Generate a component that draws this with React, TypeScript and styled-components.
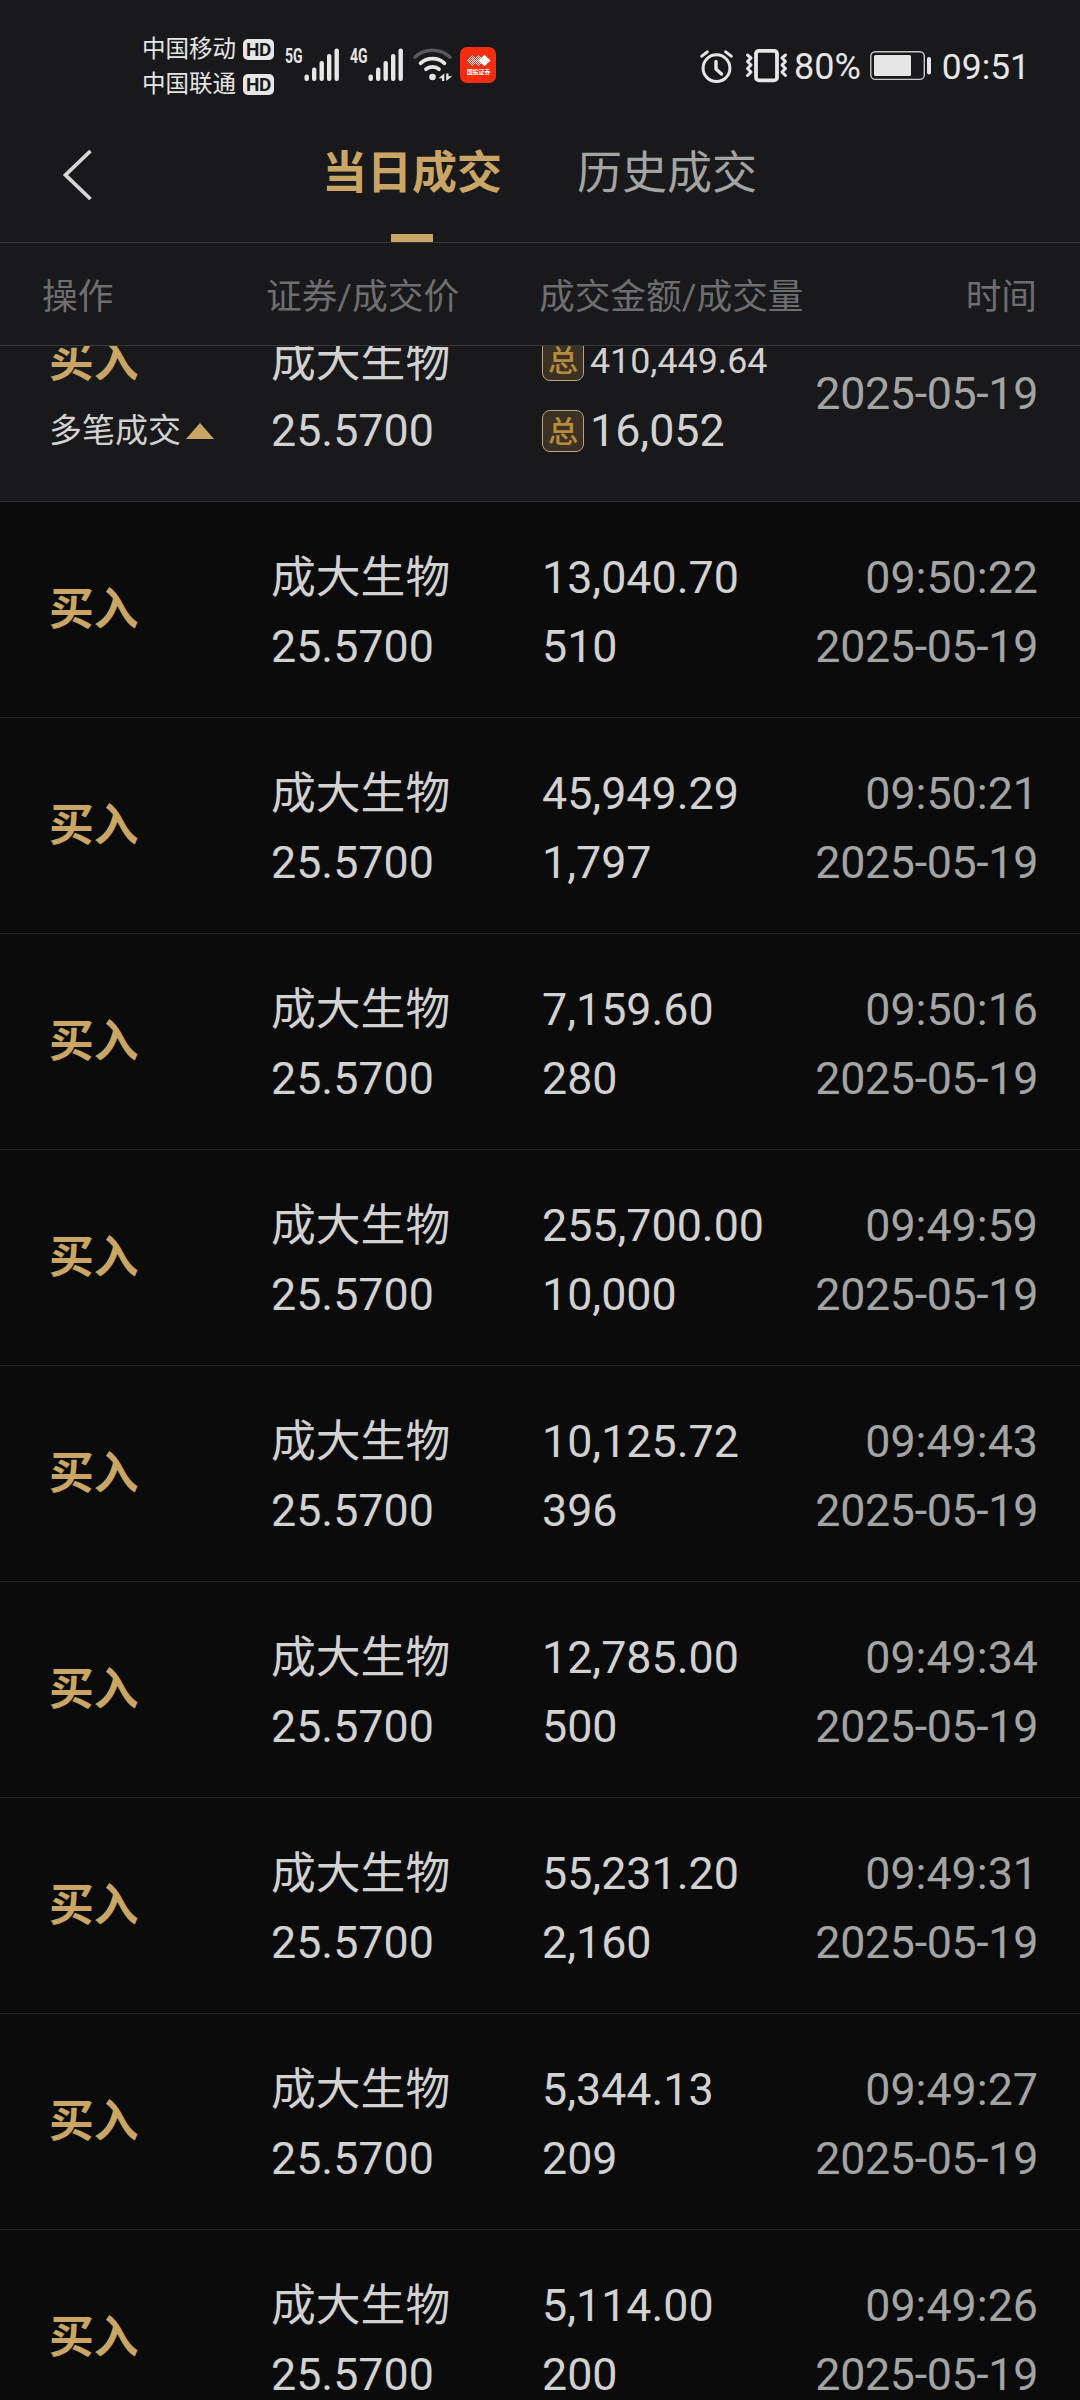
import React from 'react';
import styled, { createGlobalStyle } from 'styled-components';

const GlobalStyle = createGlobalStyle`
  * { box-sizing: border-box; }
  html, body { margin: 0; background: #0b0b0b; }
  body { font-family: Roboto, 'Noto Sans CJK SC', sans-serif; }
`;

const Screen = styled.main`
  width: 1080px;
  height: 2400px;
  display: flex;
  flex-direction: column;
  overflow: hidden;
  background: #0b0b0b;
  color: #d2d2d2;
`;

const StatusBar = styled.header`
  height: 110px;
  flex: none;
  display: flex;
  justify-content: space-between;
  align-items: flex-start;
  padding: 31px 50px 0 142px;
  background: #19191b;
  color: #e6e6e6;
`;

const StatusGroup = styled.div`
  display: flex;
  align-items: flex-start;
`;

const Carriers = styled.div`
  display: flex;
  flex-direction: column;
  padding-top: 1px;
`;

const Carrier = styled.div`
  display: flex;
  align-items: center;
  gap: 7px;
  height: 35px;
  font-size: 23.5px;
  line-height: 35px;
`;

const HdBadge = styled.span`
  width: 31px;
  height: 21px;
  border-radius: 5px;
  background: #e6e6e6;
  color: #19191b;
  font-size: 19px;
  font-weight: 700;
  line-height: 21px;
  text-align: center;
  letter-spacing: -0.5px;
`;

const NetLabel = styled.span<{ $gap: number }>`
  width: 18px;
  margin-left: ${(p) => p.$gap}px;
  margin-top: 14px;
  font-family: Roboto, sans-serif;
  font-size: 20px;
  font-weight: 700;
  line-height: 22px;
  white-space: nowrap;

  span {
    display: inline-block;
    transform: scaleX(0.7);
    transform-origin: left;
  }
`;

const Glyph = styled.svg<{ $left?: number; $top?: number }>`
  display: block;
  flex: none;
  margin-left: ${(p) => p.$left ?? 0}px;
  margin-top: ${(p) => p.$top ?? 0}px;
`;

const StatusText = styled.span<{ $left: number; $size?: number }>`
  margin-left: ${(p) => p.$left}px;
  margin-top: 13px;
  font-size: ${(p) => p.$size ?? 36}px;
  line-height: 46px;
`;

const NavBar = styled.nav`
  height: 133px;
  flex: none;
  display: flex;
  align-items: stretch;
  padding-left: 62px;
  border-bottom: 1px solid #38383a;
  background: #19191b;
`;

const BackButton = styled.button`
  width: 32px;
  margin: 0 228px 0 0;
  padding: 38px 0 0;
  border: 0;
  background: none;
  display: flex;
  align-items: flex-start;
`;

const Tabs = styled.div`
  display: flex;
  gap: 75px;
`;

const Tab = styled.div<{ $active?: boolean }>`
  display: flex;
  flex-direction: column;
  align-items: center;
  justify-content: space-between;
  padding-top: 29px;
  font-size: 45px;
  line-height: 70px;
  font-weight: ${(p) => (p.$active ? 700 : 400)};
  color: ${(p) => (p.$active ? '#c9a566' : '#a3a4a4')};
`;

const Underline = styled.span`
  width: 42px;
  height: 8px;
  background: #c9a566;
`;

const ColumnHeads = styled.div`
  height: 103px;
  flex: none;
  display: grid;
  grid-template-columns: 224px 273px 1fr auto;
  align-items: center;
  padding: 5px 43px 0 42px;
  border-bottom: 1px solid #38383a;
  background: #19191b;
  color: #6e6e70;
  font-size: 35.7px;
  line-height: 52px;
`;

const List = styled.section`
  flex: 1;
  min-height: 0;
  overflow: hidden;
`;

const Row = styled.article<{ $summary?: boolean }>`
  height: 216px;
  margin-top: ${(p) => (p.$summary ? -60 : 0)}px;
  display: grid;
  grid-template-columns: 222px 271px 1fr auto;
  align-items: start;
  padding: 41px 42px 0 49px;
  border-bottom: 1px solid ${(p) => (p.$summary ? '#333335' : '#222224')};
  background: ${(p) => (p.$summary ? '#19191b' : '#0b0b0b')};
  font-size: 44.8px;
  line-height: 69px;
  white-space: nowrap;
`;

const Cell = styled.div<{ $single?: boolean }>`
  height: ${(p) => (p.$single ? 132 : 138)}px;
  display: flex;
  flex-direction: column;
  justify-content: center;
`;

const TimeCell = styled(Cell)`
  align-items: flex-end;
  color: #a3a4a4;
`;

const DateText = styled.span`
  letter-spacing: -0.35px;
`;

const Action = styled.strong`
  font-weight: 700;
  color: #c9a566;
`;

const Multi = styled.span`
  display: flex;
  align-items: center;
  gap: 5px;
  font-size: 33px;
`;

const Triangle = styled.i`
  border: 14px solid transparent;
  border-top: 0;
  border-bottom: 16px solid #c9a566;
`;

const Total = styled.span<{ $small?: boolean }>`
  display: flex;
  align-items: center;
  gap: 6px;
  height: 69px;
  font-size: ${(p) => (p.$small ? 35.8 : 44.8)}px;
`;

const TotalBadge = styled.span<{ $lift: number }>`
  width: 42px;
  height: 42px;
  margin-bottom: ${(p) => p.$lift}px;
  border: 1px solid #b9a27c;
  border-radius: 8px;
  background: #3b3124;
  color: #b88c3e;
  font-size: 30px;
  font-weight: 500;
  line-height: 41px;
  text-align: center;
`;

function SignalBars({ left }: { left: number }) {
  const tops = [26.5, 19.5, 13, 6, 0.5];
  return (
    <Glyph $left={left} $top={17} width="36" height="34" viewBox="0 0 36 34">
      {tops.map((top, i) => (
        <rect key={top} x={0.5 + i * 7.5} y={top} width="4.4" height={33 - top} rx="2" fill="#e6e6e6" />
      ))}
    </Glyph>
  );
}

function WifiIcon() {
  return (
    <Glyph $left={9} $top={17} width="40" height="34" viewBox="0 0 40 34" fill="none" strokeLinecap="round">
      <path d="M2 9.2C12 0 27 0 37 9.2" stroke="#58585a" strokeWidth="3.4" />
      <path d="M7.5 15.3C14 9 25 9 31.5 15.3" stroke="#e6e6e6" strokeWidth="3.7" />
      <path d="M13 21.2C16.5 18.2 22.5 18.2 26 21.2" stroke="#e6e6e6" strokeWidth="3.7" />
      <circle cx="19.5" cy="29" r="3.3" fill="#e6e6e6" />
      <path d="M31.3 25.5V33H29V30.3H25.5ZM33.2 25.5V33L39.3 28.3H35.5V25.5Z" fill="#e6e6e6" />
    </Glyph>
  );
}

function BrokerIcon() {
  return (
    <Glyph $left={7} $top={16} width="36" height="36" viewBox="0 0 36 36">
      <defs>
        <pattern id="mesh" width="2" height="2" patternUnits="userSpaceOnUse">
          <rect width="1" height="1" fill="#fff" />
          <rect x="1" y="1" width="1" height="1" fill="#fff" />
        </pattern>
      </defs>
      <rect width="36" height="36" rx="7" fill="#f42d10" />
      <path d="M12.5 8L18.5 13.5L12.5 19L6.5 13.5Z" fill="url(#mesh)" />
      <path d="M18.5 8L24.5 13.5L18.5 19L12.5 13.5Z" fill="url(#mesh)" />
      <path d="M24.5 7.8L30.5 13.5L24.5 19.2L18.5 13.5Z" fill="#fff" />
      <text x="7" y="26.8" fill="#fff" fontSize="5.8" fontWeight="700" fontFamily="'Noto Sans CJK SC', sans-serif">国投证券</text>
    </Glyph>
  );
}

function AlarmIcon() {
  return (
    <Glyph $top={18} width="34" height="35" viewBox="0 0 34 35" fill="none" stroke="#e6e6e6" strokeLinecap="round">
      <circle cx="16.5" cy="19.2" r="13.4" strokeWidth="3" />
      <path d="M16 12.5V20L21.5 25" strokeWidth="3.4" strokeLinejoin="round" />
      <path d="M1.8 7.2L7.3 2.8M31.2 7.2L25.7 2.8" strokeWidth="3" />
    </Glyph>
  );
}

function VibrateIcon() {
  return (
    <Glyph $left={11} $top={17} width="44" height="35" viewBox="0 0 44 35" fill="none" stroke="#e6e6e6" strokeLinecap="round" strokeLinejoin="round">
      <rect x="11" y="2.8" width="21" height="29.6" rx="3" strokeWidth="3.8" />
      <path d="M2.5 7L6 10L2.5 13.5L6 17L2.5 20.5L6 24L2.5 27.5" strokeWidth="3" />
      <path d="M40.5 7L37 10L40.5 13.5L37 17L40.5 20.5L37 24L40.5 27.5" strokeWidth="3" />
    </Glyph>
  );
}

function BatteryIcon() {
  return (
    <Glyph $left={9} $top={20} width="62" height="30" viewBox="0 0 62 30">
      <rect x="0.8" y="0.8" width="53.5" height="27.6" rx="4.5" fill="none" stroke="#c9c9c9" strokeWidth="1.4" />
      <rect x="4" y="4" width="37" height="21" rx="1.5" fill="#e6e6e6" />
      <rect x="57" y="6" width="4" height="17.5" rx="2" fill="#e6e6e6" />
    </Glyph>
  );
}

const trades = [
  { amount: '13,040.70', volume: '510', time: '09:50:22' },
  { amount: '45,949.29', volume: '1,797', time: '09:50:21' },
  { amount: '7,159.60', volume: '280', time: '09:50:16' },
  { amount: '255,700.00', volume: '10,000', time: '09:49:59' },
  { amount: '10,125.72', volume: '396', time: '09:49:43' },
  { amount: '12,785.00', volume: '500', time: '09:49:34' },
  { amount: '55,231.20', volume: '2,160', time: '09:49:31' },
  { amount: '5,344.13', volume: '209', time: '09:49:27' },
  { amount: '5,114.00', volume: '200', time: '09:49:26' },
];

export default function App() {
  return (
    <>
      <GlobalStyle />
      <Screen>
        <StatusBar>
          <StatusGroup>
            <Carriers>
              <Carrier>中国移动<HdBadge>HD</HdBadge></Carrier>
              <Carrier>中国联通<HdBadge>HD</HdBadge></Carrier>
            </Carriers>
            <NetLabel $gap={11}><span>5G</span></NetLabel>
            <SignalBars left={1} />
            <NetLabel $gap={10}><span>4G</span></NetLabel>
            <SignalBars left={0} />
            <WifiIcon />
            <BrokerIcon />
          </StatusGroup>
          <StatusGroup>
            <AlarmIcon />
            <VibrateIcon />
            <StatusText $left={5}>80%</StatusText>
            <BatteryIcon />
            <StatusText $left={10} $size={35.4}>09:51</StatusText>
          </StatusGroup>
        </StatusBar>

        <NavBar>
          <BackButton aria-label="返回">
            <Glyph width="32" height="54" viewBox="0 0 32 54" fill="none" stroke="#d6d6d6" strokeWidth="3.8">
              <path d="M28.5 3L3.5 27L28.5 51" />
            </Glyph>
          </BackButton>
          <Tabs>
            <Tab $active>当日成交<Underline /></Tab>
            <Tab>历史成交</Tab>
          </Tabs>
        </NavBar>

        <ColumnHeads>
          <span>操作</span>
          <span>证券/成交价</span>
          <span>成交金额/成交量</span>
          <span>时间</span>
        </ColumnHeads>

        <List>
          <Row $summary>
            <Cell>
              <Action>买入</Action>
              <Multi>多笔成交<Triangle /></Multi>
            </Cell>
            <Cell>
              <span>成大生物</span>
              <span>25.5700</span>
            </Cell>
            <Cell>
              <Total $small><TotalBadge $lift={4}>总</TotalBadge>410,449.64</Total>
              <Total><TotalBadge $lift={0}>总</TotalBadge>16,052</Total>
            </Cell>
            <TimeCell $single>
              <DateText>2025-05-19</DateText>
            </TimeCell>
          </Row>
          {trades.map((trade) => (
            <Row key={trade.time}>
              <Cell $single>
                <Action>买入</Action>
              </Cell>
              <Cell>
                <span>成大生物</span>
                <span>25.5700</span>
              </Cell>
              <Cell>
                <span>{trade.amount}</span>
                <span>{trade.volume}</span>
              </Cell>
              <TimeCell>
                <span>{trade.time}</span>
                <DateText>2025-05-19</DateText>
              </TimeCell>
            </Row>
          ))}
        </List>
      </Screen>
    </>
  );
}
